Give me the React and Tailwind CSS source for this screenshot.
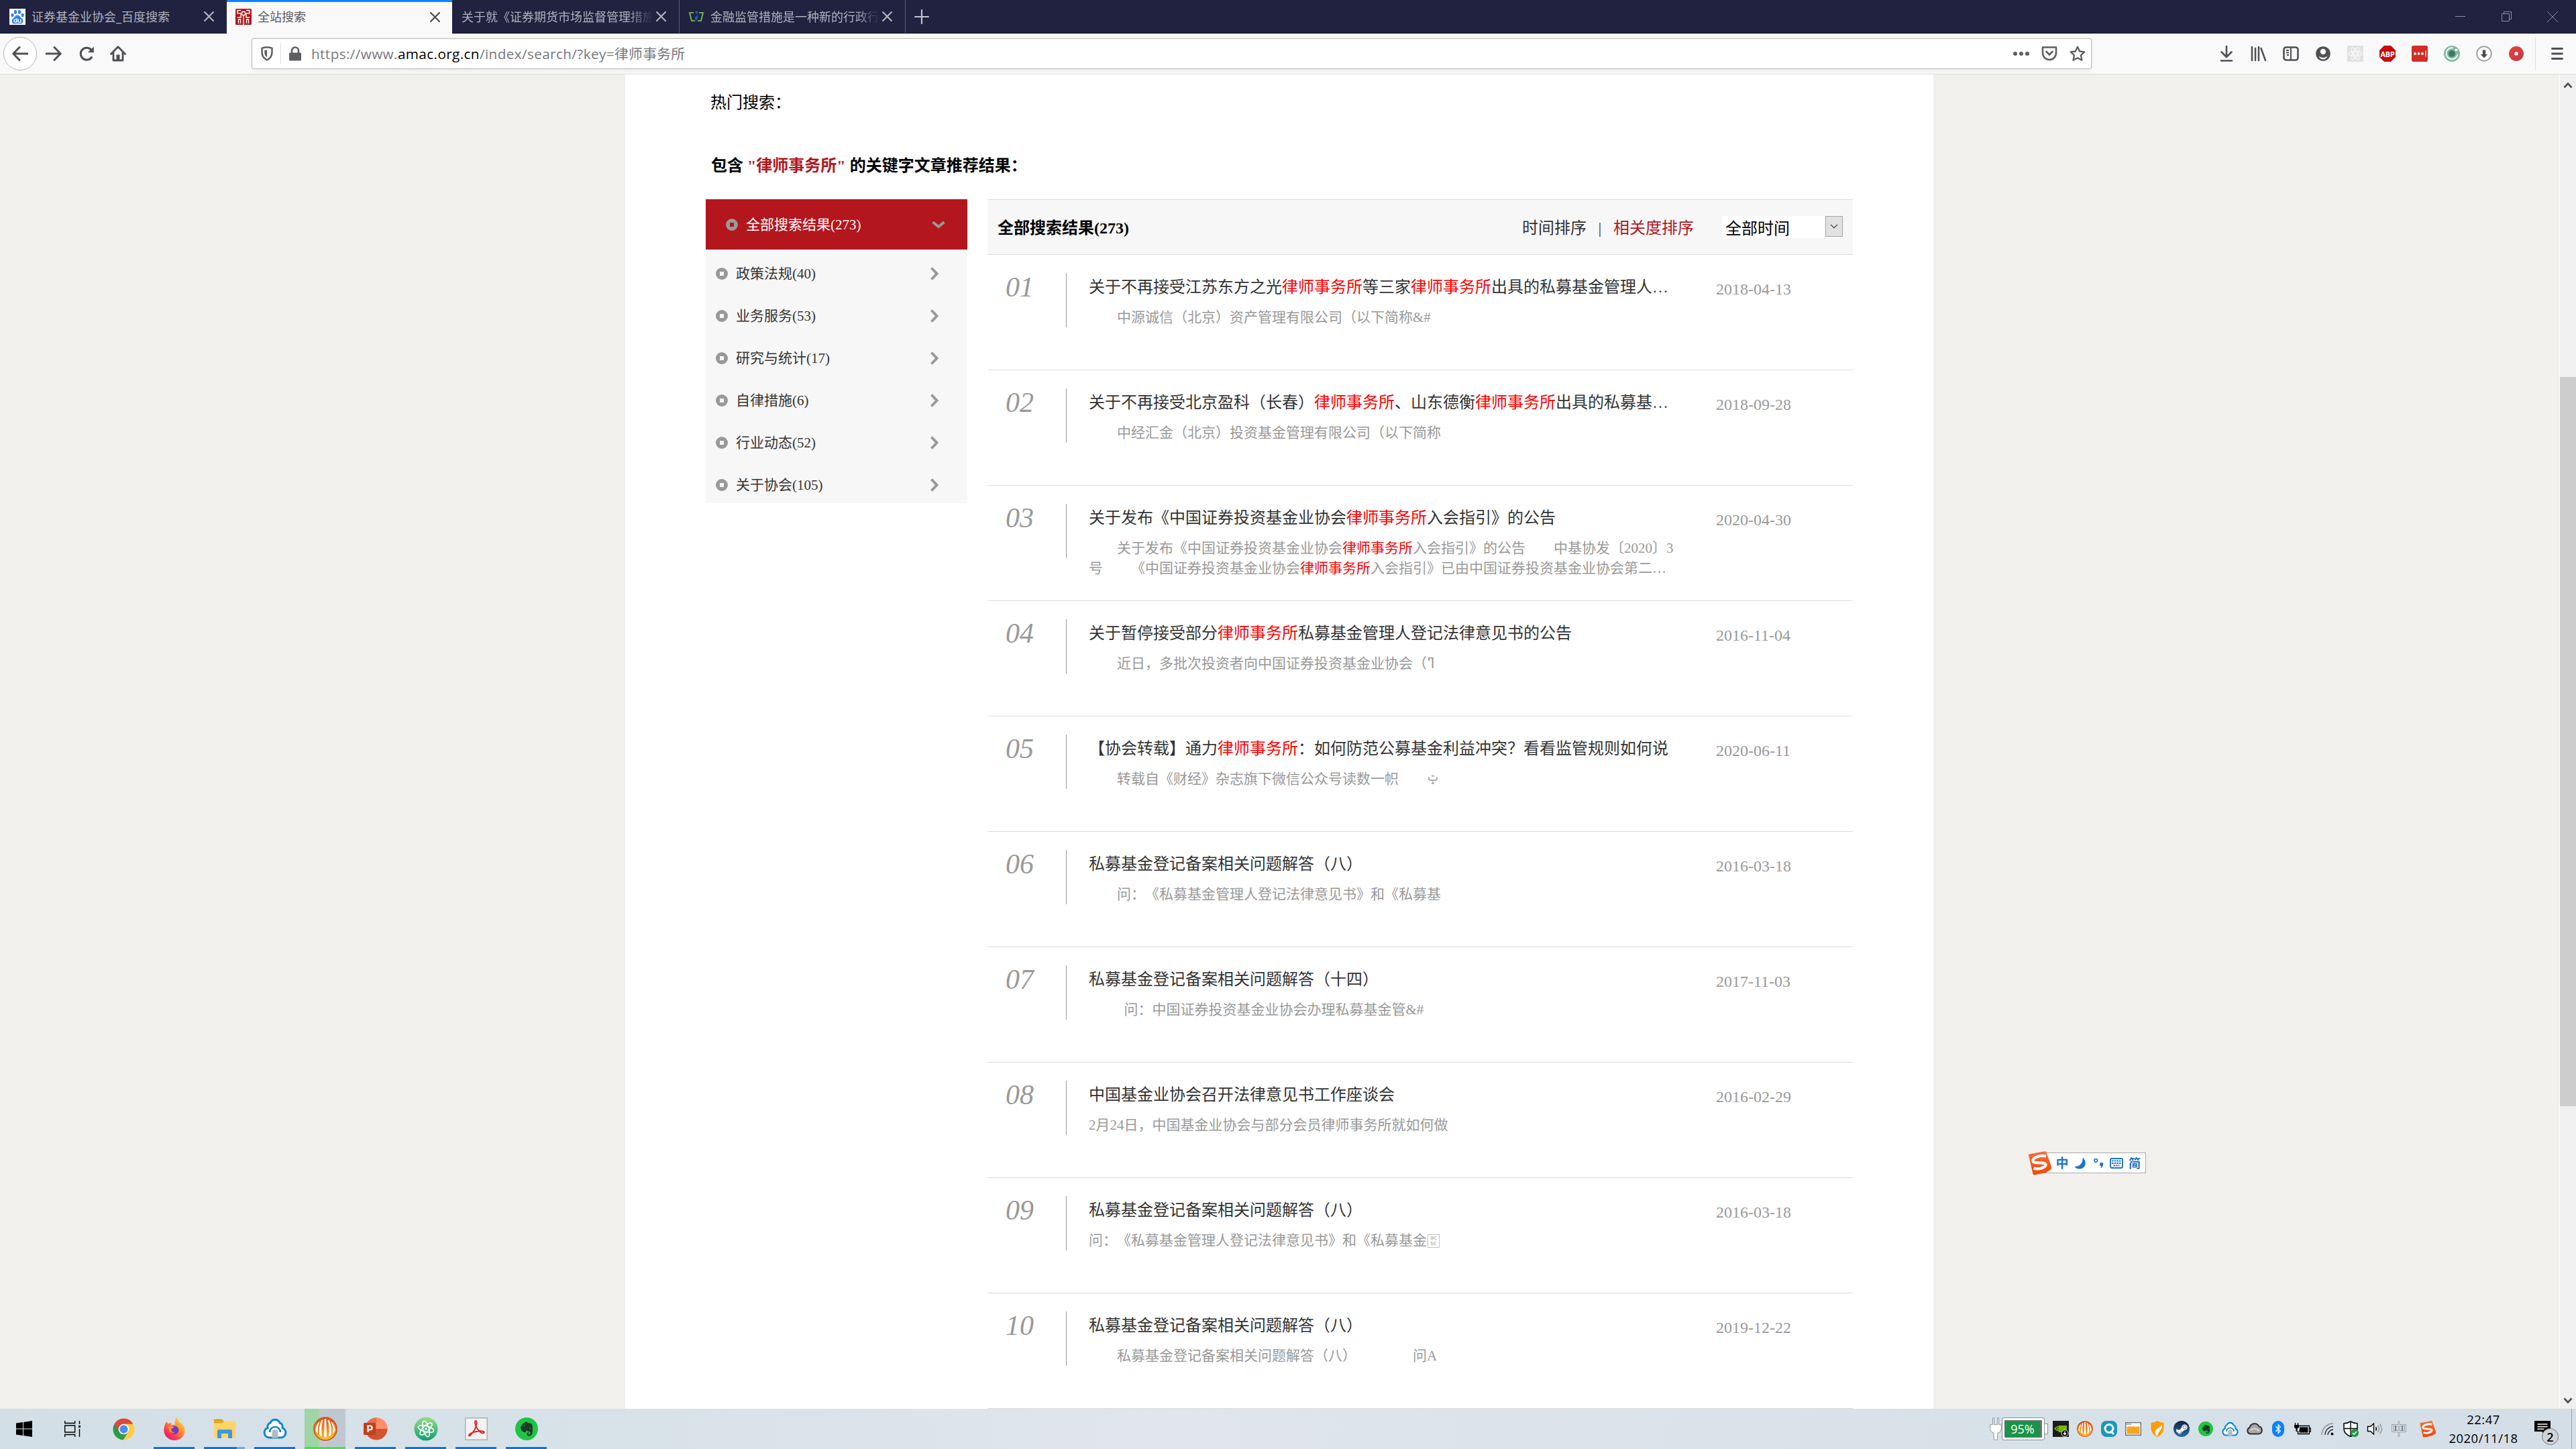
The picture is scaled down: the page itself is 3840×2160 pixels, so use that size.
import React from "react";
import { FaSteamSymbol, FaBluetoothB, FaEvernote } from "react-icons/fa";

const KW = "律师事务所";

/* ---------- browser chrome icons ---------- */
const Svg = ({ w = 24, h = 24, vb = "0 0 24 24", children, className = "" }) => (
  <svg width={w} height={h} viewBox={vb} fill="none" className={"block shrink-0 " + className}>
    {children}
  </svg>
);

const Cross = ({ color = "#b4b4c0" }) => (
  <Svg w={15} h={15} vb="0 0 14 14">
    <path d="M1 1l12 12M13 1L1 13" stroke={color} strokeWidth="2" strokeLinecap="round" />
  </Svg>
);

const BaiduIcon = () => (
  <Svg className="bg-white">
    <g fill="#2f82ff">
      <ellipse cx="9" cy="5" rx="2.2" ry="3" />
      <ellipse cx="15" cy="5" rx="2.2" ry="3" />
      <ellipse cx="4.4" cy="9.6" rx="2.1" ry="2.8" />
      <ellipse cx="19.6" cy="9.6" rx="2.1" ry="2.8" />
      <path d="M12 9.5c3 0 3.6 2.6 5.4 4 2 1.600 3 3 3 5 0 2.400-1.700 4-4 4-1.800 0-3-.4-4.400-.4s-2.600.4-4.400.4c-2.300 0-4-1.600-4-4 0-2 1-3.400 3-5 1.800-1.400 2.400-4 5.400-4z" />
    </g>
    <circle cx="9" cy="18" r="2.100" stroke="#fff" strokeWidth="1.300" />
    <path d="M11.200 14v6.300M13.300 15.800v3q0 1.500 1.500 1.500h2v-4.500" stroke="#fff" strokeWidth="1.300" />
  </Svg>
);

const AmacIcon = () => (
  <Svg>
    <rect width="24" height="24" rx="1.500" fill="#b4161d" />
    <path d="M8 2.500H3v4.500h5v6H3M16 2.500h5v4.500h-5v6h5M12 10v14M7.500 22v-6H4.500v6M16.500 22v-6h3v6" stroke="#fff" strokeWidth="1.400" />
    <circle cx="12" cy="7" r="2.700" stroke="#fff" strokeWidth="1.400" />
  </Svg>
);

const LawIcon = () => (
  <Svg>
    <path d="M8 6H2l3 12h5M16 6h6l-3 12h-5" stroke="#6aa84f" strokeWidth="2.200" />
    <path d="M13 8c3 3 1 9-3 11 1.500-3 0-5-1-7 2.500 1 4-1 4-4z" fill="#1f5fae" />
    <circle cx="12.500" cy="5.500" r="2" fill="#1f5fae" />
  </Svg>
);

const Tab = ({ width, icon, title, fade }) => (
  <div className={"flex h-full shrink-0 items-center pr-[19px] text-[18px] text-[#b1b1bd] " + width}>
    {icon}
    <span
      className={
        "ml-[9px] min-w-0 flex-1 overflow-hidden whitespace-nowrap leading-7 " +
        (fade ? "[mask-image:linear-gradient(to_right,black_86%,transparent)]" : "")
      }
    >
      {title}
    </span>
    <span className="ml-1">
      <Cross />
    </span>
  </div>
);

const TabBar = () => (
  <div className="flex h-[50px] items-stretch border-b border-[#0f1030] bg-[#20223f]">
    <Tab width="w-[338px] pl-[14px]" icon={<BaiduIcon />} title="证券基金业协会_百度搜索" />
    <div className="-mb-px flex w-[336px] items-center border-t-[3px] border-[#0a84ff] bg-[#f9f9fa] pb-[3px] pl-[13px] pr-[18px] text-[18px] text-[#5a5a60]">
      <AmacIcon />
      <span className="ml-[9px] flex-1 leading-7">全站搜索</span>
      <Cross color="#4a4a4f" />
    </div>
    <Tab width="w-[339px] border-r border-[#5b5c74] pl-[5px]" title="关于就《证券期货市场监督管理措施" fade />
    <Tab width="w-[337px] border-r border-[#5b5c74] pl-[13px]" icon={<LawIcon />} title="金融监管措施是一种新的行政行" fade />
    <div className="flex flex-1 items-center pl-[13px]">
      <Svg w={22} h={22} vb="0 0 22 22">
        <path d="M11 1v20M1 11h20" stroke="#c4c4cf" strokeWidth="2.200" strokeLinecap="round" />
      </Svg>
    </div>
    <div className="flex w-[208px] items-center">
      <span className="flex w-[70px] justify-center">
        <span className="h-px w-[15px] bg-[#8f90a2]" />
      </span>
      <span className="flex w-[68px] justify-center">
        <Svg w={15} h={15} vb="0 0 15 15">
          <path d="M.5 3.500h11v11h-11zM3.500 3.500v-3h11v11h-3" stroke="#8f90a2" />
        </Svg>
      </span>
      <span className="flex w-[70px] justify-center">
        <Svg w={16} h={16} vb="0 0 16 16">
          <path d="M0 0l16 16M16 0L0 16" stroke="#8f90a2" />
        </Svg>
      </span>
    </div>
  </div>
);

const g = "#4f4f54";
const ToolCell = ({ children }) => <span className="flex w-12 justify-center">{children}</span>;

const NavBar = () => (
  <div className="flex h-[61px] items-center border-b border-[#dcdcde] bg-[#f9f9fa] pl-[5px]">
    <span className="flex size-[50px] items-center justify-center rounded-full border border-[#b5b5b8] bg-white">
      <Svg>
        <path d="M23 12H2M11 2.500L1.800 12l9.200 9.500" stroke={g} strokeWidth="3" strokeLinecap="round" strokeLinejoin="round" />
      </Svg>
    </span>
    <span className="flex w-[50px] justify-center">
      <Svg>
        <path d="M1 12h21M13 2.500l9.200 9.500-9.200 9.500" stroke={g} strokeWidth="3" strokeLinecap="round" strokeLinejoin="round" />
      </Svg>
    </span>
    <span className="flex w-12 justify-center">
      <Svg>
        <path d="M19 6.200A9 9 0 1 0 19.500 17.500" stroke={g} strokeWidth="3" strokeLinecap="round" />
        <path d="M22.800 1.500v8.800h-8.800z" fill={g} />
      </Svg>
    </span>
    <span className="flex w-[46px] justify-center">
      <Svg>
        <path d="M1.500 12.500L12 1.800l10.500 10.700M5 11v11h14V11" stroke={g} strokeWidth="2.800" strokeLinecap="round" strokeLinejoin="round" />
        <path d="M9.500 22v-8.500h5V22z" fill={g} />
      </Svg>
    </span>
    <div className="ml-[176px] flex h-[46px] w-[2743px] items-center rounded-[3px] border border-[#b9b9bb] bg-white pl-3 shadow-[0_2px_6px_rgba(0,0,0,0.07)]">
      <Svg w={20} h={22} vb="0 0 20 22">
        <path d="M10 1.500c3 0 5.500.5 7.500 1.300V9c0 5-2.500 9-7.500 11.500C5 18 2.500 14 2.500 9V2.800C4.500 2 7 1.500 10 1.500z" stroke="#5f5f63" strokeWidth="2.500" />
        <path d="M10 5.500v11C7.500 14.500 6.300 12 6.300 9V6z" fill="#5f5f63" />
      </Svg>
      <span className="ml-[10px] h-8 w-px bg-[#dddddf]" />
      <Svg w={20} h={22} vb="0 0 20 22" className="ml-[11px]">
        <path d="M5 10V6.500a5 5 0 0 1 10 0V10" stroke="#5f5f63" strokeWidth="2.600" />
        <rect x="1" y="9.500" width="18" height="12" rx="1.500" fill="#5f5f63" />
      </Svg>
      <span className="ml-[14px] flex-1 whitespace-nowrap text-[20.7px] leading-[30px] tracking-[0.4px] text-[#77777b]">
        https://www.<span className="text-black">amac.org.cn</span>/index/search/?key={KW}
      </span>
      <Svg w={26} h={8} vb="0 0 26 8">
        <circle cx="4" cy="4" r="3" fill="#5f5f63" />
        <circle cx="13" cy="4" r="3" fill="#5f5f63" />
        <circle cx="22" cy="4" r="3" fill="#5f5f63" />
      </Svg>
      <Svg className="ml-[17px]">
        <path d="M2 2.500h20v8c0 6-4 10.500-10 10.500S2 16.500 2 10.500z" stroke="#5f5f63" strokeWidth="2.600" strokeLinejoin="round" />
        <path d="M7.500 9l4.500 4.500L16.500 9" stroke="#5f5f63" strokeWidth="2.800" strokeLinecap="round" strokeLinejoin="round" />
      </Svg>
      <Svg className="ml-[18px] mr-[8px]">
        <path d="M12 1.800l3.100 6.700 7.200.9-5.300 5 1.400 7.300L12 18.200l-6.400 3.500L7 14.400l-5.300-5 7.200-.9z" stroke="#5f5f63" strokeWidth="2.300" strokeLinejoin="round" />
      </Svg>
    </div>
    <div className="ml-[177px] flex items-center">
      <ToolCell>
        <Svg>
          <path d="M12 1v15M4.500 9.500L12 17l7.500-7.500M4 22.500h16" stroke={g} strokeWidth="2.600" strokeLinecap="round" strokeLinejoin="round" />
        </Svg>
      </ToolCell>
      <ToolCell>
        <Svg>
          <path d="M2 2v20M7 4v18M12 2v20M15.500 4l6.500 18" stroke={g} strokeWidth="2.500" strokeLinecap="round" />
        </Svg>
      </ToolCell>
      <ToolCell>
        <Svg>
          <rect x="1.500" y="2.500" width="21" height="19" rx="3.500" stroke={g} strokeWidth="2.600" />
          <path d="M12 3v18M5 7h4M5 10.500h4M6 14h3" stroke={g} strokeWidth="2" />
        </Svg>
      </ToolCell>
      <ToolCell>
        <Svg>
          <circle cx="12" cy="12" r="10.800" fill={g} />
          <circle cx="12" cy="9" r="4.200" fill="#f9f9fa" />
          <path d="M5.500 15.500q6.500 5 13 0-2 5-6.500 5t-6.500-5z" fill="#f9f9fa" />
        </Svg>
      </ToolCell>
      <ToolCell>
        <Svg>
          <rect width="24" height="24" rx="1.500" fill="#e1e1e2" />
          <g stroke="#fafafa" strokeWidth="1.100">
            <ellipse cx="12" cy="12" rx="10" ry="4" />
            <ellipse cx="12" cy="12" rx="10" ry="4" transform="rotate(60 12 12)" />
            <ellipse cx="12" cy="12" rx="10" ry="4" transform="rotate(120 12 12)" />
            <circle cx="12" cy="12" r="2.500" />
          </g>
        </Svg>
      </ToolCell>
      <ToolCell>
        <span className="flex size-6 items-center justify-center bg-[#c70d0d] text-[11px] font-bold leading-none tracking-[-0.3px] text-white [clip-path:polygon(29%_0,71%_0,100%_29%,100%_71%,71%_100%,29%_100%,0_71%,0_29%)]">
          ABP
        </span>
      </ToolCell>
      <ToolCell>
        <Svg>
          <rect width="24" height="24" rx="2.500" fill="#d32d27" />
          <circle cx="5" cy="12" r="1.900" fill="#fff" />
          <circle cx="10.500" cy="12" r="1.900" fill="#fff" />
          <circle cx="16" cy="12" r="1.900" fill="#fff" />
          <path d="M21 7.500v9" stroke="#fff" strokeWidth="1.200" />
        </Svg>
      </ToolCell>
      <ToolCell>
        <Svg>
          <circle cx="12" cy="12" r="12" fill="#7fb8a2" />
          <circle cx="12" cy="12" r="5" fill="#397a63" />
          <path d="M14 3.500A8.500 8.500 0 1 0 20.500 13" stroke="#f4f9f7" strokeWidth="2" />
          <circle cx="18.500" cy="6.500" r="2" fill="#fff" />
        </Svg>
      </ToolCell>
      <ToolCell>
        <Svg>
          <circle cx="12" cy="12" r="10.800" stroke="#a3a3a6" strokeWidth="2" fill="#fff" />
          <path d="M9.800 6.500h4.400V13h3L12 18.500 6.800 13h3z" fill="#4a4a4f" />
        </Svg>
      </ToolCell>
      <ToolCell>
        <Svg>
          <defs>
            <linearGradient id="rec" x1="0" y1="0" x2="1" y2="1">
              <stop offset="0" stopColor="#f0402f" />
              <stop offset="1" stopColor="#b83c50" />
            </linearGradient>
          </defs>
          <circle cx="12" cy="12" r="11" fill="url(#rec)" />
          <circle cx="12" cy="12" r="2.800" fill="#fff" />
        </Svg>
      </ToolCell>
      <span className="ml-1 h-[50px] w-px bg-[#dedee0]" />
      <Svg w={18} h={20} vb="0 0 18 20" className="ml-[23px]">
        <path d="M1.500 2.500h15M1.500 10h15M1.500 17.500h15" stroke={g} strokeWidth="2.800" strokeLinecap="round" />
      </Svg>
    </div>
  </div>
);

/* ---------- page ---------- */
const Bullet = ({ hole }) => (
  <span className="flex h-[18px] w-[18px] items-center justify-center rounded-full bg-[#999]">
    <span className={"size-[6px] " + hole} />
  </span>
);

const CATS = ["政策法规(40)", "业务服务(53)", "研究与统计(17)", "自律措施(6)", "行业动态(52)", "关于协会(105)"];

const Sidebar = () => (
  <div className="h-[453px] w-[390px] bg-[#f7f7f7] text-[21px] leading-[30px]">
    <div className="flex h-[75px] items-center bg-[#b4161d] pl-[30px] text-white">
      <Bullet hole="bg-[#b4161d]" />
      <span className="ml-3 flex-1">全部搜索结果(273)</span>
      <Svg w={20} h={12} vb="0 0 20 12" className="mr-[33px]">
        <path d="M1.500 2L10 9l8.500-7" stroke="#999" strokeWidth="4" />
      </Svg>
    </div>
    <div className="pt-[4px]">
      {CATS.map((c) => (
        <div key={c} className="flex h-[63px] items-center pl-[15px] text-[#333]">
          <Bullet hole="bg-[#f7f7f7]" />
          <span className="ml-3 flex-1">{c}</span>
          <Svg w={12} h={20} vb="0 0 12 20" className="mr-[43px]">
            <path d="M1.500 1.500l8 8.500-8 8.500" stroke="#999" strokeWidth="4" />
          </Svg>
        </div>
      ))}
    </div>
  </div>
);

const Mark = ({ text }) =>
  text.split(KW).map((part, i) => (
    <React.Fragment key={i}>
      {i > 0 && <span className="text-[#f00]">{KW}</span>}
      {part}
    </React.Fragment>
  ));

const ROWS = [
  { t: "关于不再接受江苏东方之光律师事务所等三家律师事务所出具的私募基金管理人…", d: "　　中源诚信（北京）资产管理有限公司（以下简称&#", date: "2018-04-13" },
  { t: "关于不再接受北京盈科（长春）律师事务所、山东德衡律师事务所出具的私募基…", d: "　　中经汇金（北京）投资基金管理有限公司（以下简称", date: "2018-09-28" },
  {
    t: "关于发布《中国证券投资基金业协会律师事务所入会指引》的公告",
    d: "　　关于发布《中国证券投资基金业协会律师事务所入会指引》的公告　　中基协发〔2020〕3",
    d2: "号　　《中国证券投资基金业协会律师事务所入会指引》已由中国证券投资基金业协会第二…",
    date: "2020-04-30",
  },
  { t: "关于暂停接受部分律师事务所私募基金管理人登记法律意见书的公告", d: "　　近日，多批次投资者向中国证券投资基金业协会（", odd: "\u07E3", oddClass: "text-[22px]", date: "2016-11-04" },
  { t: "【协会转载】通力律师事务所：如何防范公募基金利益冲突？看看监管规则如何说", d: "　　转载自《财经》杂志旗下微信公众号读数一帜　　", odd: "\u0753", oddClass: "relative -top-1 text-[16px]", date: "2020-06-11" },
  { t: "私募基金登记备案相关问题解答（八）", d: "　　问：《私募基金管理人登记法律意见书》和《私募基", date: "2016-03-18" },
  { t: "私募基金登记备案相关问题解答（十四）", d: "　　  问：中国证券投资基金业协会办理私募基金管&#", date: "2017-11-03" },
  { t: "中国基金业协会召开法律意见书工作座谈会", d: "2月24日，中国基金业协会与部分会员律师事务所就如何做", plain: true, date: "2016-02-29" },
  { t: "私募基金登记备案相关问题解答（八）", d: "问：《私募基金管理人登记法律意见书》和《私募基金", hex: ["0C", "5C"], date: "2016-03-18" },
  { t: "私募基金登记备案相关问题解答（八）", d: "　　私募基金登记备案相关问题解答（八）　　　　问A", date: "2019-12-22" },
];

const Row = ({ r, n }) => (
  <div className="flex h-[172px] border-b border-[#ddd]">
    <div className="mt-[27px] h-[81px] w-[118px] border-r border-[#999] pl-[27px] text-[42px] italic leading-[42px] text-[#999]">
      {String(n).padStart(2, "0")}
    </div>
    <div className="w-[935px] whitespace-pre pl-[33px] pt-[30px]">
      <div className="text-[24px] leading-9 text-[#333]">
        <Mark text={r.t} />
      </div>
      <div className="mt-[12px] text-[21px] leading-[30px] text-[#999]">
        {r.plain ? r.d : <Mark text={r.d} />}
        {r.odd && <bdi className={"font-['DejaVu_Sans',sans-serif] leading-none " + r.oddClass}>{r.odd}</bdi>}
        {r.hex && (
          <span className="mx-px inline-flex h-[20px] w-[18px] flex-col items-center justify-center border border-[#c4c4c4] align-[8px] font-['Liberation_Mono',monospace] text-[8px] leading-[8px]">
            <span>{r.hex[0]}</span>
            <span>{r.hex[1]}</span>
          </span>
        )}
        {r.d2 && (
          <div>
            <Mark text={r.d2} />
          </div>
        )}
      </div>
    </div>
    <div className="pl-[33px] pt-[33px] text-[24px] leading-9 text-[#999]">{r.date}</div>
  </div>
);

const Results = () => (
  <div className="ml-[30px] w-[1290px]">
    <div className="flex h-[83px] items-center border-y border-[#ddd] bg-[#f7f7f7] pl-[15px] pr-[15px] text-[24px] leading-9">
      <span className="flex-1 pt-[2px] font-bold text-black">全部搜索结果(273)</span>
      <span className="pt-[2px] text-[#333]">时间排序</span>
      <span className="w-10 pt-[2px] text-center text-[#333]">|</span>
      <span className="pt-[2px] text-[#b4161d]">相关度排序</span>
      <div className="ml-[42px] flex h-[33px] w-[180px] items-start bg-white pl-[5px]">
        <span className="flex-1 leading-[38px] text-black">全部时间</span>
        <span className="flex h-[31px] w-[26px] items-center justify-center border border-[#a5a5a5] bg-[#e1e1e1]">
          <Svg w={12} h={7} vb="0 0 12 7">
            <path d="M1 .7l5 5 5-5" stroke="#555" strokeWidth="1.400" />
          </Svg>
        </span>
      </div>
    </div>
    {ROWS.map((r, i) => (
      <Row key={i} r={r} n={i + 1} />
    ))}
  </div>
);

const ScrollBar = () => (
  <div className="flex w-[25px] flex-col items-center border-l border-white bg-[#f0f0f0]">
    <Svg w={14} h={10} vb="0 0 14 10" className="mt-[11px]">
      <path d="M1.500 8.500L7 2.500l5.500 6" stroke="#505050" strokeWidth="2.600" />
    </Svg>
    <div className="mt-[430px] h-[1087px] w-full bg-[#cdcdcd]" />
    <Svg w={14} h={10} vb="0 0 14 10" className="mb-[7px] mt-auto">
      <path d="M1.500 1.500L7 7.500l5.500-6" stroke="#505050" strokeWidth="2.600" />
    </Svg>
  </div>
);

const SogouS = ({ size }) => (
  <Svg w={size} h={size} vb="0 0 36 36">
    <defs>
      <linearGradient id="sg" x1="0" y1="0" x2="0" y2="1">
        <stop offset="0" stopColor="#fb6a35" />
        <stop offset="1" stopColor="#f04a0c" />
      </linearGradient>
    </defs>
    <path d="M2 6Q1 5 3 4.500L26 .2q2-.2 2.500 1.500L36 23q.8 3-1.500 5L28 32 11 35.500q-2 .2-2.600-1.500z" fill="url(#sg)" />
    <path d="M28 7.500C20 5.500 8 9 8.500 14.500c.6 5 18.500 1 19 5.500.4 4.500-11 8-18 5.500" stroke="#fff" strokeWidth="4.200" />
  </Svg>
);

const ImeBar = () => (
  <div className="absolute left-[3022px] top-[1715px] flex h-[37px] w-[177px] items-center">
    <div className="z-10">
      <SogouS size={36} />
    </div>
    <div className="-ml-[16px] flex h-[31px] flex-1 items-center border border-[#aaa] bg-white pl-[21px] text-[18px] font-medium leading-7 text-[#1f74c8]">
      <span className="w-[20px] text-center text-[19px] font-bold">中</span>
      <Svg w={18} h={18} vb="0 0 18 18" className="ml-2">
        <path d="M12.500.5c7.500 6 4.500 16.500-4.500 17C4.500 17.700 1.500 16 .5 13.500c7 1.500 13-4.500 12-13z" fill="#1f74c8" />
      </Svg>
      <Svg w={15} h={16} vb="0 0 15 16" className="ml-[11px]">
        <circle cx="3.300" cy="4" r="2.300" stroke="#1f74c8" strokeWidth="1.700" />
        <path d="M11.500 7a2.500 2.500 0 0 1 2.700 2.700c0 3-2 5.200-4.200 5.800 1-1.500 1.400-2.600 1.300-3.500A2.500 2.500 0 0 1 11.500 7z" fill="#1f74c8" />
      </Svg>
      <Svg w={20} h={16} vb="0 0 20 16" className="ml-[9px]">
        <rect x="1" y="1" width="18" height="14" rx="2" stroke="#1f74c8" strokeWidth="1.900" />
        <path d="M3 4.500h14M3 8h14M5.500 11.500h9" stroke="#1f74c8" strokeWidth="1.900" strokeDasharray="2.600 1" />
      </Svg>
      <span className="ml-2 w-[18px] font-bold">简</span>
    </div>
  </div>
);

/* ---------- taskbar ---------- */
const AppCell = ({ children, line = "bg-[#0078d7]", bg = "" }) => (
  <div className="flex w-[75px] flex-col items-center">
    <div className={"flex h-[57px] w-[61px] items-center justify-center pt-[3px] " + bg}>{children}</div>
    <div className={"h-[3px] w-[61px] " + line} />
  </div>
);

const Cloud = ({ size }) => (
  <Svg w={size} h={size} vb="0 0 36 36">
    <path d="M9 31a7.500 7.500 0 0 1-2-14.500 6 6 0 0 1 4-7.500 7.500 7.500 0 0 1 14 0 6 6 0 0 1 4 7.500A7.500 7.500 0 0 1 27 31z" fill="#fff" stroke="#0f86d2" strokeWidth="3" />
    <path d="M10 23a8 8 0 0 1 16 0" stroke="#0f86d2" strokeWidth="2.600" />
    <path d="M13.500 31.500v-8a4.500 4.500 0 0 1 9 0v8z" fill="#b5bbc0" />
  </Svg>
);

const Shell = ({ size, id }) => (
  <Svg w={size} h={size} vb="0 0 36 36">
    <defs>
      <linearGradient id={id} x1="0" y1="0" x2="0" y2="1">
        <stop offset="0" stopColor="#ea4a12" />
        <stop offset="1" stopColor="#fdc22a" />
      </linearGradient>
    </defs>
    <circle cx="18" cy="18" r="17" fill={"url(#" + id + ")"} stroke="#c8501a" strokeWidth="1.600" />
    <path
      d="M16.800 3h2.400l.8 26q-2 3-4 0zM12.500 4.500l2 .3Q11 16 13 29q-3 0-4-3Q8 14 12.500 4.500zM23.500 4.500l-2 .3Q25 16 23 29q3 0 4-3 1-12-3.500-21.500zM8 8l1.500.2Q5.500 15 7 25q-3-2-3.500-5Q4 13 8 8zM28 8l-1.500.2Q30.500 15 29 25q3-2 3.500-5Q32 13 28 8z"
      fill="#fff"
    />
  </Svg>
);

const Evernote = ({ size, inner }) => (
  <span className={"flex items-center justify-center rounded-full bg-[#1fc544] text-[#1d3a26] " + size}>
    <FaEvernote className={inner} />
  </span>
);

const Apps = () => (
  <div className="flex">
    <div className="flex w-[72px] items-center justify-center">
      <Svg w={24} h={24}>
        <path d="M0 3.500L10 2v9.500H0zM11 1.900L24 0v11.500H11zM0 12.500h10V22L0 20.500zM11 12.500h13V24l-13-1.900z" fill="#000" />
      </Svg>
    </div>
    <div className="flex w-[75px] items-center justify-center pr-[4px]">
      <Svg w={24} h={24}>
        <path d="M.7 0v3.500h15V0M.7 24v-3.500h15V24M.7 7h15v10H.7zM22.500 0v5M22.500 12v12" stroke="#000" strokeWidth="1.400" />
        <path d="M21 7h3v3h-3z" fill="#000" />
      </Svg>
    </div>
    <AppCell line="">
      <Svg w={33} h={33} vb="0 0 36 36">
        <circle cx="18" cy="18" r="17.500" fill="#fc4" />
        <path d="M18 18L2.800 9.300A17.500 17.500 0 0 0 17 35.500l8.500-13.500z" fill="#2a9a4b" />
        <path d="M2.800 9.300A17.500 17.500 0 0 1 33.200 9.500H18l-7.500 12.800z" fill="#db4a3c" />
        <circle cx="18" cy="18" r="8.500" fill="#fff" />
        <circle cx="18" cy="18" r="6.700" fill="#4a8af4" />
      </Svg>
    </AppCell>
    <AppCell>
      <Svg w={34} h={34} vb="0 0 36 36">
        <defs>
          <linearGradient id="ff" x1="1" y1="0" x2=".2" y2="1">
            <stop offset="0" stopColor="#fff04a" />
            <stop offset=".45" stopColor="#ff9328" />
            <stop offset=".8" stopColor="#fc3158" />
            <stop offset="1" stopColor="#e31587" />
          </linearGradient>
        </defs>
        <path d="M21 0c3 3 4 5 4.500 7.500 5 2 9 7 9 13.500 0 8.500-7 15-16.500 15S1.500 29 1.500 20.500C1.500 14 3 10 6 6.500L8 10q3-2 6-1l-2 3 7-1q-1-6 2-11z" fill="url(#ff)" />
        <circle cx="18" cy="20" r="6.700" fill="#7038cf" />
        <path d="M8 15q6-1.500 10 0l-5 3q0 6 6 6-8 3-11-9z" fill="#ff9a1f" />
      </Svg>
    </AppCell>
    <AppCell line="bg-[linear-gradient(to_right,#0078d7_80%,#66ade4_80%)]">
      <Svg w={32} h={30} vb="0 0 32 30">
        <path d="M0 1.500Q0 .5 1 .5h11l3 3.500v4H0z" fill="#dc9c10" />
        <rect y="3.500" x="0" width="32" height="25" rx="1" fill="#fdd566" />
        <path d="M0 6.500h12l3-3H0z" fill="#e5a61c" />
        <path d="M5 29V18q0-2 2-2h18q2 0 2 2v11h-6v-7H11v7z" fill="#3f97dd" />
      </Svg>
    </AppCell>
    <AppCell>
      <Cloud size={36} />
    </AppCell>
    <AppCell line="bg-[#4be33b]" bg="bg-[linear-gradient(to_right,#9fd4a4_36%,#bfc8d0_36%)]">
      <Shell size={36} id="sh1" />
    </AppCell>
    <AppCell>
      <Svg w={36} h={34} vb="0 0 36 34">
        <circle cx="19" cy="17" r="16.500" fill="#d35230" />
        <path d="M19 .5A16.500 16.500 0 0 1 35.500 17H19z" fill="#ff8f6b" />
        <path d="M19 .5V17H2.500A16.500 16.500 0 0 1 19 .5z" fill="#ed6c47" />
        <rect x="0" y="8" width="18" height="18" rx="1.500" fill="#c43e1c" />
        <path d="M6.500 22V12.500h3.200a2.900 2.900 0 0 1 0 5.800H6.500" stroke="#fff" strokeWidth="2.200" />
      </Svg>
    </AppCell>
    <AppCell>
      <Svg w={36} h={36} vb="0 0 36 36">
        <defs>
          <linearGradient id="at" x1="0" y1="0" x2="0" y2="1">
            <stop offset="0" stopColor="#9bdb8b" />
            <stop offset="1" stopColor="#0f9f74" />
          </linearGradient>
        </defs>
        <circle cx="18" cy="18" r="17.500" fill="url(#at)" />
        <g stroke="#fff" strokeWidth="1.500">
          <ellipse cx="18" cy="18" rx="12" ry="4.500" transform="rotate(15 18 18)" />
          <ellipse cx="18" cy="18" rx="12" ry="4.500" transform="rotate(75 18 18)" />
          <ellipse cx="18" cy="18" rx="12" ry="4.500" transform="rotate(135 18 18)" />
        </g>
        <circle cx="18" cy="18" r="1.700" fill="#fff" />
      </Svg>
    </AppCell>
    <AppCell>
      <Svg w={34} h={34} vb="0 0 34 34">
        <rect x=".8" y=".8" width="32.400" height="32.400" fill="#f3f3f3" stroke="#a2a8ad" strokeWidth="1.300" />
        <path d="M16 5c3.500 0 1 9-2 14S6.500 29 6 27c-.6-2.600 9-6.500 16-6.800 6-.2 8 1.800 6 3-3 1.600-9-4.200-11.500-10C15 9.500 14.500 5 16 5z" stroke="#e2231a" strokeWidth="1.900" />
      </Svg>
    </AppCell>
    <AppCell>
      <Evernote size="size-[34px]" inner="text-[24px]" />
    </AppCell>
  </div>
);

const TrayCell = ({ children }) => <span className="flex w-9 justify-center">{children}</span>;

const Tray = () => (
  <div className="ml-auto flex items-center">
    <Svg w={18} h={34} vb="0 0 18 34">
      <path d="M4.500.7h2v10h5v-10h2v10h3.800v6q0 5-5.500 6.500v10H6.200v-10Q.7 21.700.7 16.700v-6h3.800z" fill="#fff" stroke="#8f979d" />
    </Svg>
    <div className="flex h-[34px] w-[64px] items-center justify-center rounded-[3px] border border-[#8a9196] bg-white p-[3px]">
      <span className="flex h-full w-full items-center justify-center border border-r-[3px] border-[#6b7378] bg-[#1a9447] text-[18px] leading-none text-white">
        95%
      </span>
    </div>
    <div className="mr-[1px] h-4 w-[5px] border border-l-0 border-[#8a9196] bg-white" />
    <TrayCell>
      <Svg>
        <rect width="24" height="24" fill="#1c1c1c" />
        <path d="M9 7h12v10H9z" fill="#76b900" />
        <path d="M3 12q6-7 13 0-6 6-13 0zM6.500 12q3-3 6 0-3 3-6 0z" stroke="#76b900" strokeWidth="1.400" />
        <circle cx="18" cy="18.500" r="5" fill="#111" stroke="#ddd" />
        <path d="M18 15.500v5M16 18.500l2 2 2-2" stroke="#fff" strokeWidth="1.300" />
      </Svg>
    </TrayCell>
    <TrayCell>
      <Shell size={24} id="sh2" />
    </TrayCell>
    <TrayCell>
      <Svg>
        <rect width="24" height="24" rx="8" fill="#1c97b5" />
        <circle cx="12" cy="11.500" r="6" stroke="#e8fbff" strokeWidth="3" />
        <path d="M14 15l5 5" stroke="#e8fbff" strokeWidth="3" />
      </Svg>
    </TrayCell>
    <TrayCell>
      <Svg w={24} h={20} vb="0 0 24 20">
        <rect x=".7" y=".7" width="22.600" height="18.600" fill="#fff" stroke="#666" strokeWidth="1.300" />
        <path d="M2 3h7" stroke="#666" strokeWidth="1.600" strokeDasharray="1.600 1" />
        <rect x="2.500" y="6.500" width="19" height="11" fill="#f9a51c" />
      </Svg>
    </TrayCell>
    <TrayCell>
      <Svg>
        <path d="M12 0q5 3 9.500 3v8c0 6-4 10.500-9.500 13C6.500 21.500 2.500 17 2.500 11V3Q7 3 12 0z" fill="#fb9d0d" />
        <path d="M18.500 5.500c1 5-1 7-3 9.500-2.500 3-3 5-3.500 8-3-2-4-5-2.500-8.500 1.500-3.500 7-4 9-9z" fill="#fff" />
      </Svg>
    </TrayCell>
    <TrayCell>
      <span className="flex size-6 items-center justify-center rounded-full bg-[linear-gradient(to_bottom,#15223f,#2a6ea5)] text-white">
        <FaSteamSymbol className="text-[19px]" />
      </span>
    </TrayCell>
    <TrayCell>
      <Evernote size="size-[22px]" inner="text-[15px]" />
    </TrayCell>
    <TrayCell>
      <Cloud size={25} />
    </TrayCell>
    <TrayCell>
      <Svg w={25} h={20} vb="0 0 25 20">
        <path d="M6 17.500a5 5 0 0 1-.5-9.500 7.500 7.500 0 0 1 14-1.500 5.600 5.600 0 0 1-.5 11z" fill="#a8a8a8" stroke="#333" strokeWidth="2" />
        <path d="M6 12q6-5 14 1" stroke="#d8d8d8" strokeWidth="2" />
      </Svg>
    </TrayCell>
    <TrayCell>
      <span className="flex h-6 w-[18px] items-center justify-center rounded-[9px] bg-[#0a82fb] text-white">
        <FaBluetoothB className="text-[16px]" />
      </span>
    </TrayCell>
    <TrayCell>
      <Svg w={25} h={18} vb="0 0 25 18">
        <path d="M6 4.500h16.500v12H5.500V12M22.500 8h2v5h-2M1.500 0v3M5.500 0v3" stroke="#000" strokeWidth="1.300" />
        <path d="M8 6.500h12.500v8H7.500V12q-1 0 .5-2zM0 3h7v3q0 2-2.500 2.500V13h-2V8.500Q0 8 0 6z" fill="#000" />
      </Svg>
    </TrayCell>
    <TrayCell>
      <Svg w={22} h={20} vb="0 0 22 20" className="ml-1">
        <path d="M2 19A17 17 0 0 1 19 2" stroke="#8d959b" strokeWidth="1.500" />
        <path d="M7 19A12.500 12.500 0 0 1 19 6.500M11 19a8.500 8.500 0 0 1 8-8" stroke="#30363a" strokeWidth="1.500" />
        <circle cx="17.500" cy="17.500" r="2" fill="#000" />
      </Svg>
    </TrayCell>
    <TrayCell>
      <Svg>
        <path d="M12 1q5 3 10 3v8c0 5-4 9-10 11.500C6 21 2 17 2 12V4q5 0 10-3z" fill="#fff" stroke="#000" strokeWidth="1.500" />
        <path d="M12 1v22M2 11.500h20" stroke="#000" strokeWidth="1.400" />
        <circle cx="18" cy="18" r="6" fill="#1e9448" />
        <path d="M15 18l2.200 2.200L21 16" stroke="#fff" strokeWidth="1.600" />
      </Svg>
    </TrayCell>
    <TrayCell>
      <Svg w={24} h={20} vb="0 0 24 20">
        <path d="M1.500 6.500h4L10.500 2v16l-5-4.500h-4z" fill="#fff" stroke="#000" strokeWidth="1.400" />
        <path d="M13.500 7.500q2 2.500 0 5" stroke="#000" strokeWidth="1.400" />
        <path d="M16.500 5q4 5 0 10M19.500 2.500q6 7.500 0 15" stroke="#8d959b" strokeWidth="1.400" />
      </Svg>
    </TrayCell>
    <TrayCell>
      <Svg w={22} h={24} vb="0 0 22 24">
        <path d="M1.500 6.500h19v9h-19zM6 6.500v9M16 6.500v9M11 .5v23" stroke="#7d858b" strokeWidth="2.400" />
        <path d="M1.500 6.500h19v9h-19zM11 1v22" stroke="#f4f7f9" strokeWidth="1" />
      </Svg>
    </TrayCell>
    <span className="flex w-12 justify-center">
      <SogouS size={25} />
    </span>
    <div className="w-[120px] whitespace-nowrap text-center text-[18.5px] leading-[28px] tracking-[0.5px] text-black">
      <div>22:47</div>
      <div>2020/11/18</div>
    </div>
    <div className="relative ml-4 w-[56px] self-stretch border-r border-[#9aa5ad]">
      <Svg w={24} h={24} className="mt-[18px]">
        <path d="M0 0h24v16h-7v6l-6-6H0z" fill="#000" />
        <path d="M4.500 5h15M4.500 8.700h15M4.500 12.300h10" stroke="#fff" strokeWidth="1.400" />
      </Svg>
      <span className="absolute left-[11px] top-[29px] flex size-[25px] items-center justify-center rounded-full border border-[#777] bg-[#d0d4d7] text-[18px] font-semibold leading-none text-black">
        2
      </span>
    </div>
    <span className="w-[6px]" />
  </div>
);

export default function App() {
  return (
    <div className="relative flex h-[2160px] w-[3840px] flex-col overflow-hidden bg-[#f1f0ed] font-['Open_Sans','Noto_Sans_CJK_SC',sans-serif] [text-spacing-trim:space-all]">
      <TabBar />
      <NavBar />
      <div className="flex h-[1989px] overflow-hidden font-['Liberation_Serif','Noto_Sans_CJK_SC',serif]">
        <div className="flex-1">
          <div className="ml-[932px] h-full w-[1950px] bg-white pl-[120px] pt-6">
            <div className="pl-[7px] text-[24px] leading-9 text-black">热门搜索：</div>
            <div className="mt-[58px] pl-[8px] text-[24px] font-bold leading-9 text-black">
              包含 <span className="text-[#b4161d]">"{KW}"</span> 的关键字文章推荐结果：
            </div>
            <div className="mt-8 flex items-start">
              <Sidebar />
              <Results />
            </div>
          </div>
        </div>
        <ScrollBar />
      </div>
      <div className="flex h-[60px] bg-[linear-gradient(to_right,#d3dfe7,#d8e2e9_25%,#e0e6eb_45%,#dae3e9_65%,#d3dee7)]">
        <Apps />
        <Tray />
      </div>
      <ImeBar />
    </div>
  );
}
